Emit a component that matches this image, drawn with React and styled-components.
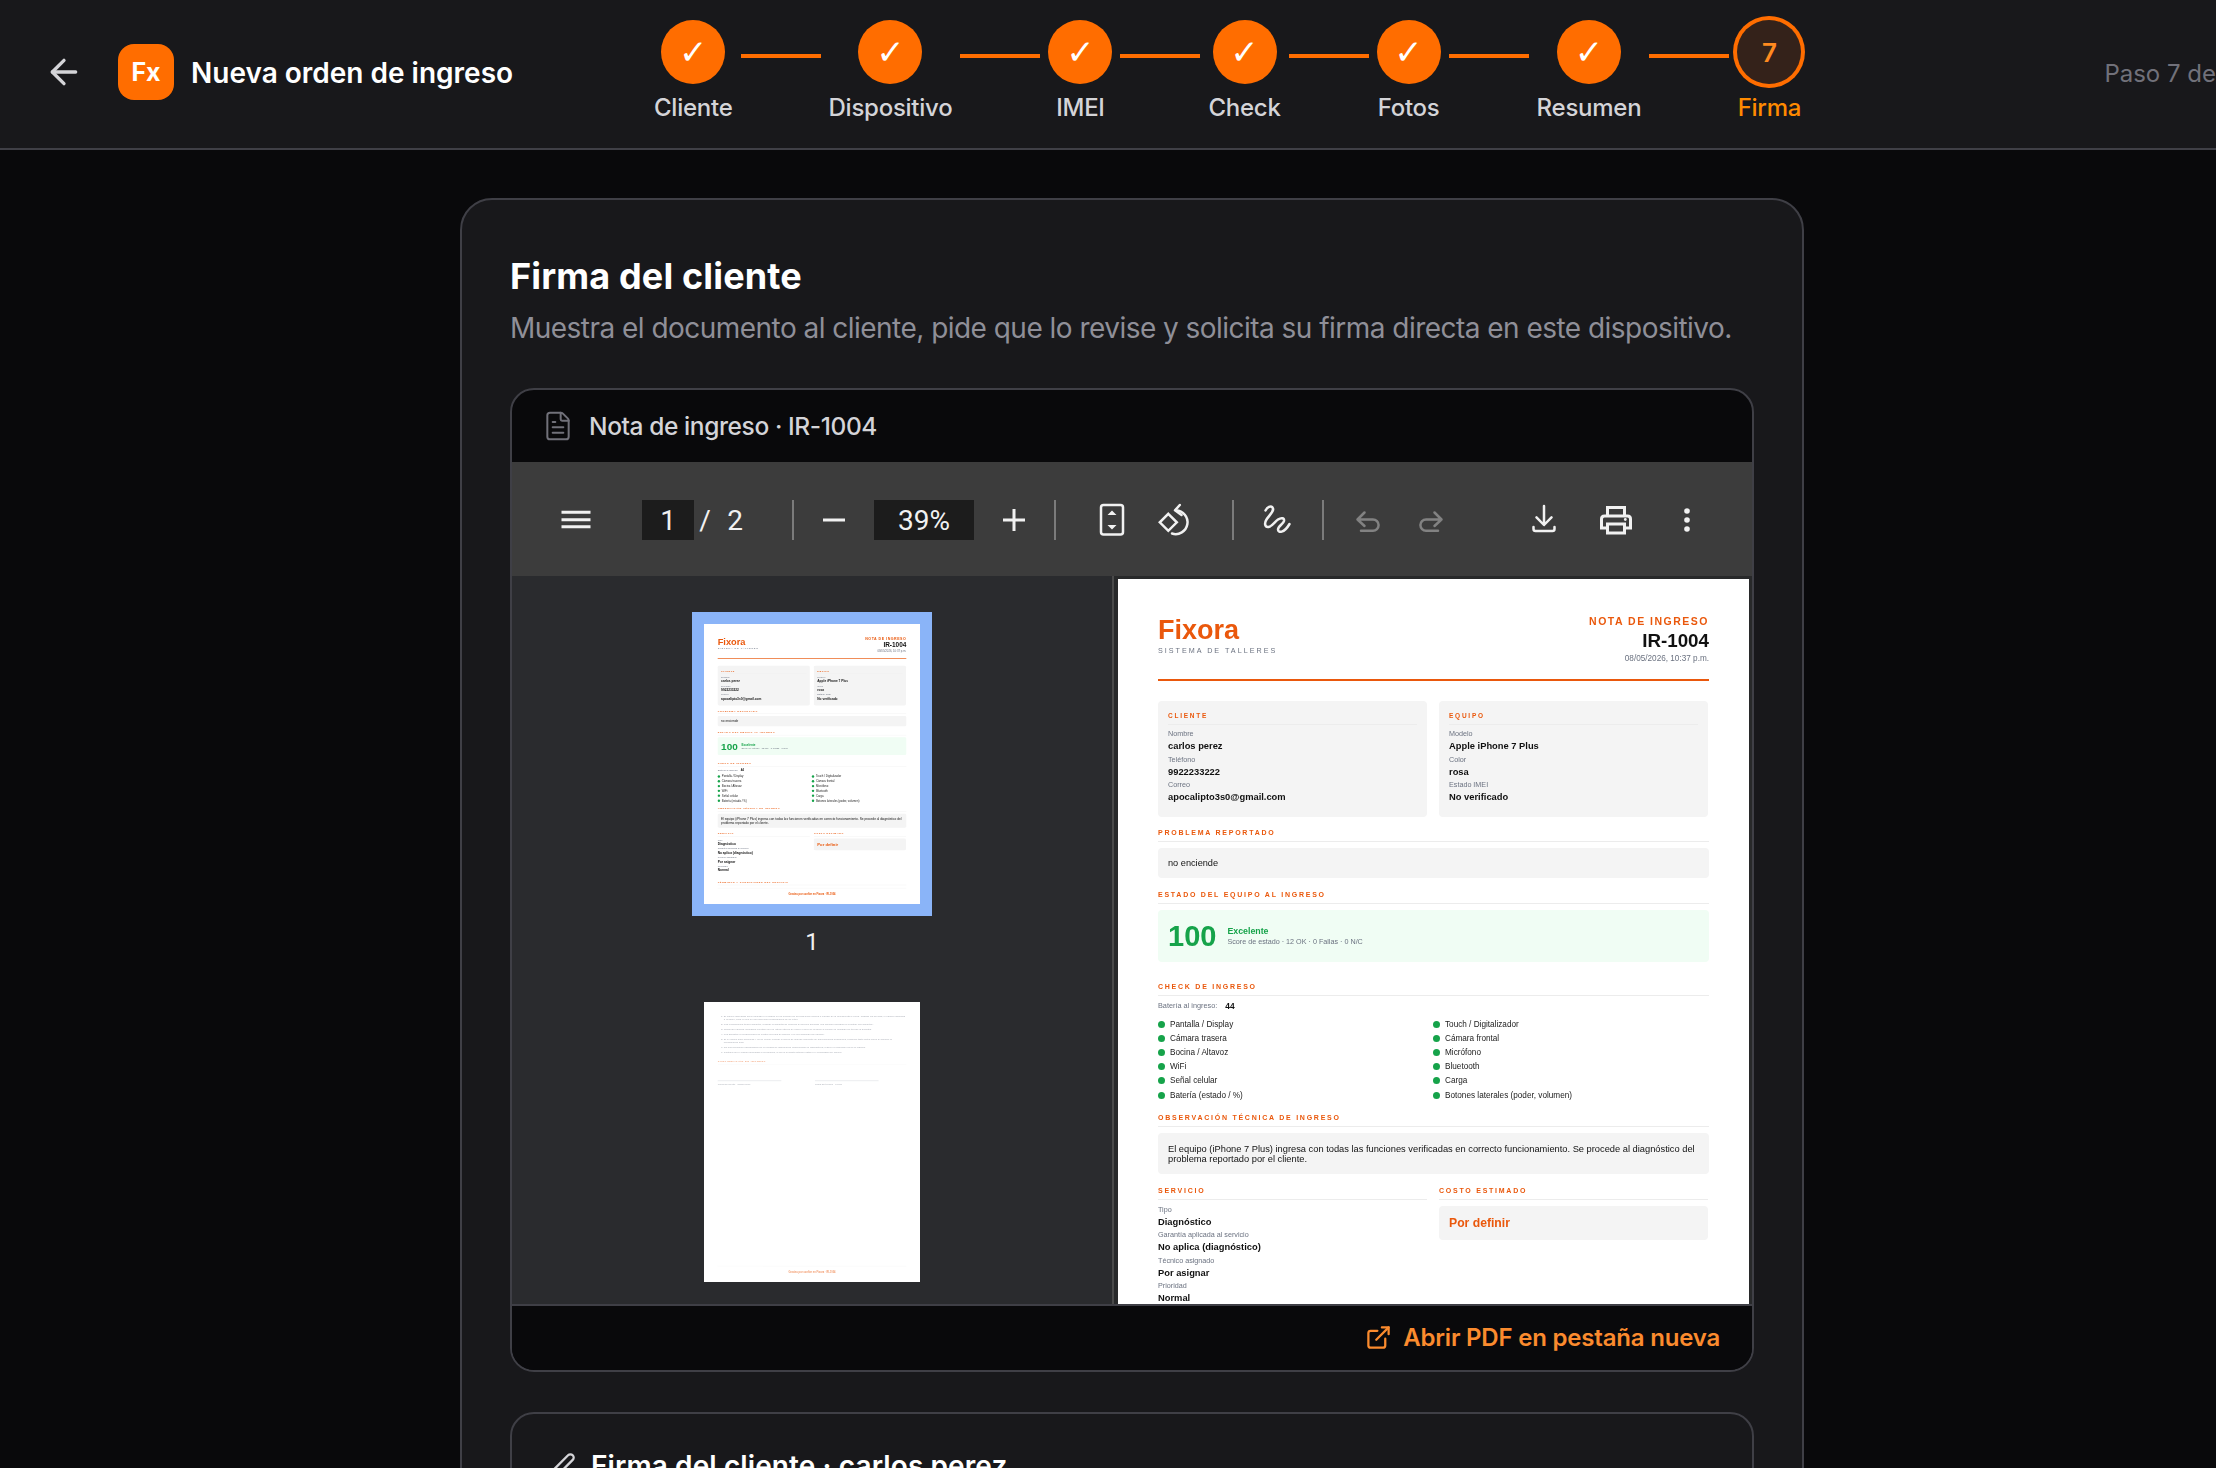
import React from "react";
import styled, { createGlobalStyle } from "styled-components";
import { ArrowLeft, ExternalLink, FileText, Pen } from "lucide-react";

const GlobalStyle = createGlobalStyle`
  html, body {
    margin: 0;
    height: 1468px;
    overflow: hidden;
    background: #09090b;
    font-family: Inter, "Noto Sans", sans-serif;
  }
  * {
    box-sizing: border-box;
  }
`;

const Header = styled.header`
  display: flex;
  align-items: flex-start;
  height: 150px;
  padding-top: 20px;
  background: #18181b;
  border-bottom: 2px solid #3f3f46;
  white-space: nowrap;
  overflow: hidden;
`;

const Brand = styled.div`
  flex: none;
  display: flex;
  align-items: center;
  width: 654px;
  height: 104px;
  padding-left: 44px;
  color: #d4d4d8;
`;

const Logo = styled.div`
  display: flex;
  align-items: center;
  justify-content: center;
  width: 56px;
  height: 56px;
  margin-left: 34px;
  border-radius: 16px;
  background: #ff6d00;
  color: #fff;
  font-size: 25px;
  font-weight: 700;
`;

const HeaderTitle = styled.h1`
  margin: 2px 0 0 17px;
  color: #fff;
  font-size: 28px;
  font-weight: 600;
`;

const Stepper = styled.div`
  flex: none;
  display: flex;
  align-items: flex-start;
  gap: 8px;
`;

const Step = styled.div`
  display: flex;
  flex-direction: column;
  align-items: center;
  min-width: 64px;
`;

const Circle = styled.div`
  display: flex;
  align-items: center;
  justify-content: center;
  width: 64px;
  height: 64px;
  border-radius: 50%;
  background: ${(p) => (p.$active ? "#34221a" : "#ff6d00")};
  box-shadow: ${(p) => (p.$active ? "0 0 0 4px #ff6d00" : "none")};
  color: ${(p) => (p.$active ? "#ff8a1f" : "#fff")};
  font-family: ${(p) => (p.$active ? "Inter" : '"DejaVu Sans"')}, sans-serif;
  font-size: ${(p) => (p.$active ? "26px" : "34px")};
  font-weight: ${(p) => (p.$active ? 600 : 700)};
`;

const StepLabel = styled.span`
  margin-top: 6px;
  color: ${(p) => (p.$active ? "#ff8a00" : "#d4d4d8")};
  font-size: 24px;
  font-weight: 500;
  line-height: 36px;
  letter-spacing: -0.25px;
`;

const Connector = styled.div`
  width: 80px;
  height: 4px;
  margin-top: 34px;
  background: #ff6d00;
`;

const StepCount = styled.span`
  flex: none;
  margin: 36px 0 0 303px;
  color: #71717a;
  font-size: 24px;
  line-height: 36px;
`;

const Main = styled.main`
  width: 1804px;
  padding: 48px 0 0 460px;
`;

const Card = styled.section`
  width: 1344px;
  padding: 48px;
  background: #18181b;
  border: 2px solid #3f3f46;
  border-radius: 32px;
`;

const Title = styled.h2`
  margin: 0;
  color: #fff;
  font-size: 36px;
  font-weight: 700;
  line-height: 56px;
  letter-spacing: 0.15px;
`;

const Subtitle = styled.p`
  margin: 4px 0 40px;
  color: #8f8f98;
  font-size: 28px;
  line-height: 40px;
  letter-spacing: -0.53px;
  white-space: nowrap;
`;

const ViewerCard = styled.div`
  background: #09090b;
  border: 2px solid #3f3f46;
  border-radius: 24px;
  overflow: hidden;
`;

const ViewerTitle = styled.div`
  display: flex;
  align-items: center;
  gap: 15px;
  height: 72px;
  padding-left: 30px;
  color: #d4d4d8;
  font-size: 24.5px;
  font-weight: 500;
  letter-spacing: -0.4px;
  svg {
    color: #71717a;
  }
`;

const Toolbar = styled.div`
  display: flex;
  align-items: center;
  height: 114px;
  padding: 2px 0 0 34px;
  background: #3c3c3c;
  color: #f1f1f1;
  font-family: Roboto, sans-serif;
  font-size: 28px;
`;

const ToolButton = styled.div`
  flex: none;
  display: flex;
  align-items: center;
  justify-content: center;
  width: 60px;
  height: 40px;
  margin-left: ${(p) => p.$ml || 0}px;
  color: ${(p) => (p.$dim ? "#828282" : "#f1f1f1")};
`;

const ToolField = styled.div`
  flex: none;
  display: flex;
  align-items: center;
  justify-content: center;
  width: ${(p) => p.$w}px;
  height: 40px;
  margin-left: ${(p) => p.$ml}px;
  background: #1c1c1c;
`;

const ToolText = styled.span`
  flex: none;
  width: ${(p) => p.$w}px;
  text-align: center;
`;

const ToolDivider = styled.div`
  flex: none;
  width: 2px;
  height: 40px;
  margin-left: ${(p) => p.$ml}px;
  background: #7b7b7b;
`;

const ViewerBody = styled.div`
  display: flex;
  height: 728px;
  background: #28292a;
  overflow: hidden;
`;

const Sidebar = styled.aside`
  flex: none;
  display: flex;
  flex-direction: column;
  align-items: center;
  width: 602px;
  padding-top: 36px;
  background: #2a2b2e;
  border-right: 2px solid #4a4a4a;
  overflow: hidden;
`;

const Thumb = styled.div`
  flex: none;
  padding: 12px;
  background: ${(p) => (p.$selected ? "#8ab4f8" : "transparent")};
`;

const ThumbClip = styled.div`
  width: 216px;
  height: 280px;
  background: #fff;
  overflow: hidden;
  filter: blur(0.4px);
`;

const ThumbScale = styled.div`
  width: 631px;
  height: 818px;
  transform: scale(0.3423);
  transform-origin: 0 0;
`;

const ThumbNumber = styled.div`
  flex: none;
  margin: 8px 0 30px;
  color: #f1f1f1;
  font-family: Roboto, sans-serif;
  font-size: 24px;
  line-height: 36px;
`;

const PageArea = styled.div`
  flex: 1;
  padding: 3px 0 0 4px;
  overflow: hidden;
  filter: blur(0.25px);
`;

const Sheet = styled.div`
  display: flex;
  flex-direction: column;
  width: 631px;
  height: 818px;
  padding: 36px 40px 24px;
  background: #fff;
  color: #111;
  font-family: "Liberation Sans", Arial, sans-serif;
  ${(p) => p.$pale && "> * { opacity: 0.6; }"}
`;

const SheetHeader = styled.div`
  flex: none;
  display: flex;
  justify-content: space-between;
  height: 66px;
  padding-bottom: 15px;
  border-bottom: 2px solid #ea580c;
`;

const BrandName = styled.div`
  color: #ea580c;
  font-size: 27px;
  font-weight: 700;
  line-height: 31px;
`;

const BrandTag = styled.div`
  color: #6b7280;
  font-size: 7.2px;
  line-height: 10px;
  letter-spacing: 2px;
`;

const SheetMeta = styled.div`
  text-align: right;
`;

const MetaKind = styled.div`
  color: #ea580c;
  font-size: 10.5px;
  font-weight: 700;
  line-height: 13px;
  letter-spacing: 1.5px;
`;

const MetaCode = styled.div`
  font-size: 18.8px;
  font-weight: 700;
  line-height: 25px;
`;

const MetaDate = styled.div`
  color: #6b7280;
  font-size: 8.2px;
  line-height: 11px;
`;

const TwoCols = styled.div`
  flex: none;
  display: grid;
  grid-template-columns: 269px 269px;
  gap: 12px;
  align-items: start;
  margin-top: ${(p) => p.$mt || 0}px;
`;

const InfoCard = styled.div`
  padding: 10px 10px 11.5px;
  background: #f4f4f4;
  border-radius: 4px;
`;

const CardHeading = styled.div`
  margin-bottom: 4px;
  padding-bottom: 3px;
  border-bottom: 1px solid #ececec;
  color: #ea580c;
  font-size: 6.5px;
  font-weight: 700;
  line-height: 10px;
  letter-spacing: 1.75px;
`;

const Section = styled.div`
  flex: none;
  margin-top: ${(p) => p.$mt || 0}px;
`;

const SectionHeading = styled.div`
  margin-bottom: ${(p) => p.$mb ?? 6}px;
  padding-bottom: 3px;
  border-bottom: 1px solid #ececec;
  color: #ea580c;
  font-size: 7px;
  font-weight: 700;
  line-height: 10px;
  letter-spacing: 1.75px;
`;

const Field = styled.div`
  margin-bottom: 2.5px;
`;

const FieldLabel = styled.div`
  margin-bottom: 1px;
  color: #6b7280;
  font-size: 7.2px;
  line-height: 10px;
`;

const FieldValue = styled.div`
  font-size: 9.35px;
  font-weight: 700;
  line-height: 12px;
`;

const Note = styled.div`
  padding: ${(p) => (p.$tall ? "11px 10px 10px" : "9px 10px")};
  background: #f4f4f4;
  border-radius: 4px;
  font-size: ${(p) => (p.$tall ? "9.3px" : "9.2px")};
  line-height: ${(p) => (p.$tall ? "10px" : "12px")};
`;

const ScoreBox = styled.div`
  display: flex;
  align-items: center;
  gap: 11px;
  height: 52px;
  padding: 0 10px;
  background: #f0fdf4;
  border-radius: 4px;
`;

const ScoreValue = styled.div`
  color: #16a34a;
  font-size: 29px;
  font-weight: 700;
`;

const ScoreName = styled.div`
  color: #16a34a;
  font-size: 8.8px;
  font-weight: 700;
  line-height: 12px;
`;

const ScoreDetail = styled.div`
  color: #6b7280;
  font-size: 7.2px;
  line-height: 10px;
`;

const BatteryRow = styled.div`
  display: flex;
  align-items: center;
  gap: 8px;
  margin-bottom: 6px;
  color: #6b7280;
  font-size: 7.3px;
  line-height: 10px;
  b {
    color: #111;
    font-size: 8.4px;
  }
`;

const CheckGrid = styled.div`
  display: grid;
  grid-template-columns: 275px 275px;
`;

const CheckItem = styled.div`
  display: flex;
  align-items: center;
  gap: 5px;
  height: 14.2px;
  color: #222;
  font-size: 8.2px;
  &::before {
    content: "";
    width: 7px;
    height: 7px;
    border-radius: 50%;
    background: #16a34a;
  }
`;

const CostBox = styled.div`
  padding: 11px 10px;
  background: #f4f4f4;
  border-radius: 4px;
  color: #ea580c;
  font-size: 12.2px;
  font-weight: 700;
  line-height: 12px;
`;

const SheetFooter = styled.div`
  flex: none;
  margin-top: auto;
  padding-top: 12px;
  border-top: 1px solid #f0f0f0;
  color: #ea580c;
  font-size: 7.5px;
  font-weight: 700;
  line-height: 10px;
  text-align: center;
`;

const Terms = styled.ol`
  flex: none;
  margin: -1px 0 0;
  padding: 0 0 0 18px;
  color: #6b7280;
  font-size: 7.4px;
  line-height: 11px;
  li {
    margin-bottom: 3px;
  }
`;

const SignatureRow = styled.div`
  flex: none;
  display: grid;
  grid-template-columns: 186px 186px;
  gap: 98px;
  margin-top: 48px;
`;

const Signature = styled.div`
  padding-top: 4px;
  border-top: 1px solid #9ca3af;
  color: #6b7280;
  font-size: 7px;
  line-height: 10px;
`;

const ViewerFooter = styled.div`
  display: flex;
  align-items: center;
  justify-content: flex-end;
  gap: 11px;
  height: 66px;
  padding: 0 32px 2px 0;
  background: #09090b;
  border-top: 2px solid #3f3f46;
  color: #fb8b2e;
  font-size: 24px;
  font-weight: 600;
  letter-spacing: -0.2px;
`;

const SignCard = styled(ViewerCard)`
  margin-top: 40px;
  height: 200px;
  padding: 32px 0 0 36px;
  background: #18181b;
`;

const SignTitle = styled.div`
  display: flex;
  align-items: center;
  gap: 15px;
  color: #fff;
  font-size: 28px;
  font-weight: 600;
  line-height: 40px;
  letter-spacing: 0.1px;
  svg {
    color: #d4d4d8;
  }
`;

const steps = ["Cliente", "Dispositivo", "IMEI", "Check", "Fotos", "Resumen"];

const checks = ["Pantalla / Display", "Touch / Digitalizador", "Cámara trasera", "Cámara frontal", "Bocina / Altavoz", "Micrófono", "WiFi", "Bluetooth", "Señal celular", "Carga", "Batería (estado / %)", "Botones laterales (poder, volumen)"];

const terms = [
  "El equipo ingresado será reparado o revisado en un máximo de 15 días para compra o cambio de la herramienta o pieza. Pasado los 15 días, el equipo ingresará a revisión, para lo cual no nos hacemos responsables de su retiro.",
  "Las reparaciones tienen garantía, verificar la garantía de acuerdo al servicio aplicado (los equipos mojados no cuentan con garantía).",
  "Todas las equipos reparados cuentan con un último interno de orden o sello de revisión al equipo en respaldo de tiempo la garantía.",
  "Los garantía en reparaciones se emitirá por falla de fábrica y no por descuido del usuario.",
  "Si el equipo sufre bloqueos y no se puede realizar el check de ingreso completo de sus funciones principales, realizará tanto antes como al aprobar la confirmación final.",
  "No nos hacemos responsables de la pérdida de información almacenada en dispositivos; realice un respaldo previo al ingreso.",
  "Contará con el equipo ingresado a reparación, si así lo necesita retirarlo usted o el encargado del equipo.",
];

function PageOne() {
  return (
    <Sheet>
      <SheetHeader>
        <div>
          <BrandName>Fixora</BrandName>
          <BrandTag>SISTEMA DE TALLERES</BrandTag>
        </div>
        <SheetMeta>
          <MetaKind>NOTA DE INGRESO</MetaKind>
          <MetaCode>IR-1004</MetaCode>
          <MetaDate>08/05/2026, 10:37 p.m.</MetaDate>
        </SheetMeta>
      </SheetHeader>
      <TwoCols $mt={20}>
        <InfoCard>
          <CardHeading>CLIENTE</CardHeading>
          <Field><FieldLabel>Nombre</FieldLabel><FieldValue>carlos perez</FieldValue></Field>
          <Field><FieldLabel>Teléfono</FieldLabel><FieldValue>9922233222</FieldValue></Field>
          <Field><FieldLabel>Correo</FieldLabel><FieldValue>apocalipto3s0@gmail.com</FieldValue></Field>
        </InfoCard>
        <InfoCard>
          <CardHeading>EQUIPO</CardHeading>
          <Field><FieldLabel>Modelo</FieldLabel><FieldValue>Apple iPhone 7 Plus</FieldValue></Field>
          <Field><FieldLabel>Color</FieldLabel><FieldValue>rosa</FieldValue></Field>
          <Field><FieldLabel>Estado IMEI</FieldLabel><FieldValue>No verificado</FieldValue></Field>
        </InfoCard>
      </TwoCols>
      <Section $mt={11}>
        <SectionHeading>PROBLEMA REPORTADO</SectionHeading>
        <Note>no enciende</Note>
      </Section>
      <Section $mt={12}>
        <SectionHeading>ESTADO DEL EQUIPO AL INGRESO</SectionHeading>
        <ScoreBox>
          <ScoreValue>100</ScoreValue>
          <div>
            <ScoreName>Excelente</ScoreName>
            <ScoreDetail>Score de estado · 12 OK · 0 Fallas · 0 N/C</ScoreDetail>
          </div>
        </ScoreBox>
      </Section>
      <Section $mt={20}>
        <SectionHeading $mb={5}>CHECK DE INGRESO</SectionHeading>
        <BatteryRow>Batería al ingreso: <b>44</b></BatteryRow>
        <CheckGrid>
          {checks.map((name) => (
            <CheckItem key={name}>{name}</CheckItem>
          ))}
        </CheckGrid>
      </Section>
      <Section $mt={11}>
        <SectionHeading>OBSERVACIÓN TÉCNICA DE INGRESO</SectionHeading>
        <Note $tall>
          El equipo (iPhone 7 Plus) ingresa con todas las funciones verificadas en correcto funcionamiento. Se procede al diagnóstico del problema reportado por el cliente.
        </Note>
      </Section>
      <TwoCols $mt={11.5}>
        <div>
          <SectionHeading $mb={5}>SERVICIO</SectionHeading>
          <Field><FieldLabel>Tipo</FieldLabel><FieldValue>Diagnóstico</FieldValue></Field>
          <Field><FieldLabel>Garantía aplicada al servicio</FieldLabel><FieldValue>No aplica (diagnóstico)</FieldValue></Field>
          <Field><FieldLabel>Técnico asignado</FieldLabel><FieldValue>Por asignar</FieldValue></Field>
          <Field><FieldLabel>Prioridad</FieldLabel><FieldValue>Normal</FieldValue></Field>
        </div>
        <div>
          <SectionHeading>COSTO ESTIMADO</SectionHeading>
          <CostBox>Por definir</CostBox>
        </div>
      </TwoCols>
      <Section $mt={21}>
        <SectionHeading>TÉRMINOS Y CONDICIONES DEL SERVICIO</SectionHeading>
      </Section>
      <SheetFooter>Gracias por confiar en Fixora · IR-1004</SheetFooter>
    </Sheet>
  );
}

function PageTwo() {
  return (
    <Sheet $pale>
      <Terms>
        {terms.map((t) => (
          <li key={t}>{t}</li>
        ))}
      </Terms>
      <Section $mt={13}>
        <SectionHeading $mb={0}>CONFIRMACIÓN DE INGRESO</SectionHeading>
      </Section>
      <SignatureRow>
        <Signature>Firma del cliente · carlos perez</Signature>
        <Signature>Firma del técnico · Fixora</Signature>
      </SignatureRow>
      <SheetFooter>Gracias por confiar en Fixora · IR-1004</SheetFooter>
    </Sheet>
  );
}

function ToolIcon({ children }) {
  return (
    <svg width="40" height="40" viewBox="0 0 40 40" fill="none" stroke="currentColor" strokeWidth="2.5" strokeLinecap="round" strokeLinejoin="round">
      {children}
    </svg>
  );
}

export default function App() {
  return (
    <>
      <GlobalStyle />
      <Header>
        <Brand>
          <ArrowLeft size={40} strokeWidth={2} />
          <Logo>Fx</Logo>
          <HeaderTitle>Nueva orden de ingreso</HeaderTitle>
        </Brand>
        <Stepper>
          {steps.map((name) => (
            <React.Fragment key={name}>
              <Step>
                <Circle>✓</Circle>
                <StepLabel>{name}</StepLabel>
              </Step>
              <Connector />
            </React.Fragment>
          ))}
          <Step>
            <Circle $active>7</Circle>
            <StepLabel $active>Firma</StepLabel>
          </Step>
        </Stepper>
        <StepCount>Paso 7 de 7</StepCount>
      </Header>
      <Main>
        <Card>
          <Title>Firma del cliente</Title>
          <Subtitle>Muestra el documento al cliente, pide que lo revise y solicita su firma directa en este dispositivo.</Subtitle>
          <ViewerCard>
            <ViewerTitle>
              <FileText size={32} strokeWidth={1.5} />
              Nota de ingreso · IR-1004
            </ViewerTitle>
            <Toolbar>
              <ToolButton>
                <ToolIcon>
                  <path d="M5.5 12.3H34.5M5.5 19.8H34.5M5.5 26.8H34.5" strokeWidth="3" strokeLinecap="butt" />
                </ToolIcon>
              </ToolButton>
              <ToolField $w={52} $ml={36}>1</ToolField>
              <ToolText $w={22}>/</ToolText>
              <ToolText $w={38}>2</ToolText>
              <ToolDivider $ml={38} />
              <ToolButton $ml={10}>
                <ToolIcon>
                  <path d="M9 20H31" strokeWidth="3" strokeLinecap="butt" />
                </ToolIcon>
              </ToolButton>
              <ToolField $w={100} $ml={10}>39%</ToolField>
              <ToolButton $ml={10}>
                <ToolIcon>
                  <path d="M9 20H31M20 9V31" strokeWidth="3" strokeLinecap="butt" />
                </ToolIcon>
              </ToolButton>
              <ToolDivider $ml={10} />
              <ToolButton $ml={26}>
                <ToolIcon>
                  <rect x="9" y="5" width="22" height="29.5" rx="2.5" />
                  <path d="M20 10.5L24.5 15H15.5ZM15.5 25H24.5L20 29.5Z" fill="currentColor" stroke="none" />
                </ToolIcon>
              </ToolButton>
              <ToolButton $ml={3}>
                <ToolIcon>
                  <path d="M13.3 13.8L21.8 22.3L13.3 30.8L4.8 22.3Z" strokeLinejoin="miter" />
                  <path d="M21 10.5A11.8 11.8 0 1 1 17 33.5" />
                  <path d="M24.8 5L20 10.3L26.5 15" />
                </ToolIcon>
              </ToolButton>
              <ToolDivider $ml={27} />
              <ToolButton $ml={14}>
                <ToolIcon>
                  <path d="M7.5 10.5C9.5 7 12.5 5.5 14.5 7.5C17 10.5 11.5 15 8.5 19.5C6 23.5 7 27.5 10.5 27C14 26.5 17 21.5 20 19.5C23 17.5 26.5 17.5 26 21C25.5 24 20 26 20 29.5C20 33 26 33.5 31.5 24" />
                </ToolIcon>
              </ToolButton>
              <ToolDivider $ml={14} />
              <ToolButton $ml={14} $dim>
                <ToolIcon>
                  <path d="M16.5 12.5L9.5 19.5L16.5 26M9.5 19.5H25A5.6 5.6 0 0 1 25 30.7H13" />
                </ToolIcon>
              </ToolButton>
              <ToolButton $ml={3} $dim>
                <ToolIcon>
                  <path d="M23.5 12.5L30.5 19.5L23.5 26M30.5 19.5H15A5.6 5.6 0 0 0 15 30.7H27" />
                </ToolIcon>
              </ToolButton>
              <ToolButton $ml={53}>
                <ToolIcon>
                  <path d="M20 6V24M12.5 17.3L20 25L27.5 17.3" />
                  <path d="M9.5 27V29Q9.5 31 11.5 31H28.5Q30.5 31 30.5 29V27" />
                </ToolIcon>
              </ToolButton>
              <ToolButton $ml={12}>
                <ToolIcon>
                  <g strokeWidth="3" strokeLinecap="butt" strokeLinejoin="miter">
                    <path d="M11.5 15V7.5H28.5V15" />
                    <path d="M10 28H5.5V19Q5.5 16 8.5 16H31.5Q34.5 16 34.5 19V28H30" />
                    <rect x="11.5" y="24" width="17" height="9" />
                  </g>
                  <circle cx="29.3" cy="19.5" r="1.4" fill="currentColor" stroke="none" />
                </ToolIcon>
              </ToolButton>
              <ToolButton $ml={11}>
                <ToolIcon>
                  <g fill="currentColor" stroke="none">
                    <circle cx="20" cy="11" r="2.8" />
                    <circle cx="20" cy="20" r="2.8" />
                    <circle cx="20" cy="29" r="2.8" />
                  </g>
                </ToolIcon>
              </ToolButton>
            </Toolbar>
            <ViewerBody>
              <Sidebar>
                <Thumb $selected>
                  <ThumbClip>
                    <ThumbScale>
                      <PageOne />
                    </ThumbScale>
                  </ThumbClip>
                </Thumb>
                <ThumbNumber>1</ThumbNumber>
                <Thumb>
                  <ThumbClip>
                    <ThumbScale>
                      <PageTwo />
                    </ThumbScale>
                  </ThumbClip>
                </Thumb>
              </Sidebar>
              <PageArea>
                <PageOne />
              </PageArea>
            </ViewerBody>
            <ViewerFooter>
              <ExternalLink size={27} strokeWidth={2} />
              Abrir PDF en pestaña nueva
            </ViewerFooter>
          </ViewerCard>
          <SignCard>
            <SignTitle>
              <Pen size={28} strokeWidth={2} />
              Firma del cliente · carlos perez
            </SignTitle>
          </SignCard>
        </Card>
      </Main>
    </>
  );
}
